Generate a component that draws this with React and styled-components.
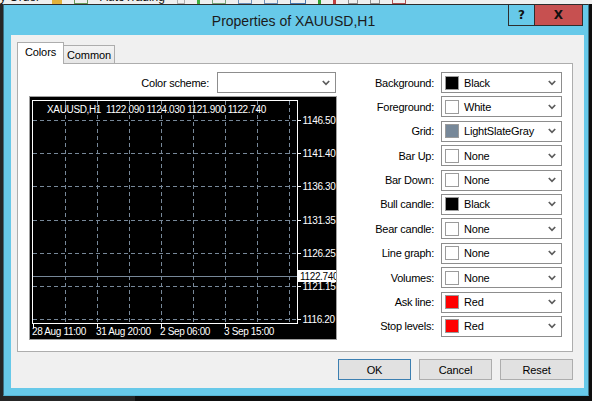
import React from 'react';
import styled, { createGlobalStyle } from 'styled-components';

const UI = `"Liberation Sans", Arial, sans-serif`;

const Global = createGlobalStyle`
  html, body { margin: 0; padding: 0; }
  body {
    width: 592px; height: 401px; overflow: hidden;
    background: #1d1d1d;
    font-family: ${UI};
  }
`;

const Desktop = styled.div`
  width: 592px;
  height: 401px;
  display: flex;
  flex-direction: column;
  background: linear-gradient(90deg, #262626 0 135px, #0e0e0e 135px);
`;

const TopStrip = styled.div`
  height: 4px;
  background: #efefef;
  display: flex;
  align-items: flex-end;
  gap: 12px;
  overflow: hidden;
  font-size: 12px;
  line-height: 14px;
  color: #111;
`;

const StripText = styled.span`
  white-space: nowrap;
`;

const StripIcon = styled.span`
  width: ${(p) => p.$w || 12}px;
  height: 14px;
  box-sizing: border-box;
  border: 1px solid ${(p) => p.$c};
  background: ${(p) => (p.$fill ? p.$c : 'transparent')};
  flex: none;
`;

const Window = styled.div`
  margin-left: 3px;
  width: 586px;
  height: 392px;
  box-sizing: border-box;
  border: 1px solid #2c2c2c;
  border-left-color: #3b6f82;
  border-right-color: #3b6f82;
  border-bottom: 1px solid #56b6d6;
  background: #67c9e9;
  display: flex;
  flex-direction: column;
`;

const TitleBar = styled.div`
  height: 30px;
  flex: none;
  display: grid;
  grid-template-columns: 1fr auto 1fr;
  align-items: center;
  padding-right: 5px;
`;

const Title = styled.div`
  grid-column: 2;
  font-family: ${UI};
  font-size: 14px;
  color: #1b1b1b;
  white-space: nowrap;
  padding-top: 1px;
`;

const CaptionButtons = styled.div`
  grid-column: 3;
  justify-self: end;
  align-self: start;
  display: flex;
`;

const CaptionButton = styled.div`
  width: ${(p) => p.$w}px;
  height: 21px;
  box-sizing: border-box;
  border: 1px solid #2e2e2e;
  border-top: none;
  ${(p) => (p.$close ? 'border-left: none;' : '')}
  background: ${(p) => (p.$close ? '#c75050' : 'transparent')};
  display: flex;
  align-items: center;
  justify-content: center;
  font-family: "DejaVu Sans", sans-serif;
  font-weight: bold;
  font-size: 12px;
  color: #111;
`;

const Client = styled.div`
  flex: 1;
  margin: 0 4px 7px 7px;
  background: #f0f0f0;
  padding: 7px 11px 0 6px;
  display: flex;
  flex-direction: column;
  font-family: ${UI};
  font-size: 11px;
  color: #000;
`;

const TabRow = styled.div`
  height: 21px;
  display: flex;
  align-items: flex-end;
  flex: none;
`;

const Tab = styled.div`
  box-sizing: border-box;
  width: ${(p) => p.$w}px;
  height: ${(p) => (p.$active ? 22 : 18)}px;
  margin-bottom: ${(p) => (p.$active ? -1 : 0)}px;
  border: 1px solid #adadad;
  border-bottom: none;
  ${(p) => (p.$active ? '' : 'border-left: none;')}
  background: ${(p) => (p.$active ? '#ffffff' : 'linear-gradient(#f3f3f3, #e6e6e6)')};
  position: relative;
  z-index: ${(p) => (p.$active ? 1 : 0)};
  display: flex;
  align-items: center;
  justify-content: center;
  padding-bottom: ${(p) => (p.$active ? 3 : 0)}px;
  letter-spacing: -0.1px;
`;

const Panel = styled.div`
  height: 289px;
  box-sizing: border-box;
  border: 1px solid #adadad;
  background: #ffffff;
  display: flex;
  justify-content: space-between;
  padding: 8px 10px 0 11px;
  flex: none;
`;

const LeftCol = styled.div`
  width: 308px;
  display: flex;
  flex-direction: column;
  gap: 3px;
`;

const SchemeRow = styled.div`
  display: flex;
  justify-content: flex-end;
  align-items: center;
  gap: 8px;
  padding-right: 1px;
`;

const Label = styled.div`
  white-space: nowrap;
  letter-spacing: -0.25px;
  text-align: right;
  justify-self: end;
  align-self: center;
`;

const Combo = styled.div`
  width: ${(p) => p.$w}px;
  height: 21px;
  box-sizing: border-box;
  border: 1px solid #8d8d8d;
  background: #fff;
  display: flex;
  align-items: center;
  padding: 0 5px 0 3px;
`;

const Swatch = styled.div`
  width: 14px;
  height: 14px;
  box-sizing: border-box;
  border: 1px solid #9b9b9b;
  background: ${(p) => p.$c};
  flex: none;
`;

const ComboText = styled.span`
  margin-left: 5px;
  white-space: nowrap;
  letter-spacing: -0.2px;
`;

const ChevronSvg = styled.svg`
  margin-left: auto;
  flex: none;
  display: block;
`;

const Chevron = () => (
  <ChevronSvg width="8" height="6" viewBox="0 0 8 6">
    <path d="M0.8 1 L4 4.3 L7.2 1" fill="none" stroke="#5c5c5c" strokeWidth="1.7" />
  </ChevronSvg>
);

const ChartBox = styled.div`
  width: 308px;
  height: 244px;
  box-sizing: border-box;
  border: 1px solid #a0a0a0;
  background: #000;
  overflow: hidden;
`;

const ChartSvg = styled.svg`
  display: block;
  text {
    font-family: ${UI};
    font-size: 10px;
    letter-spacing: -0.35px;
    fill: #ffffff;
  }
`;

const RightCol = styled.div`
  display: grid;
  grid-template-columns: auto 121px;
  grid-auto-rows: 21px;
  column-gap: 7px;
  row-gap: 3.4px;
  align-content: start;
`;

const ButtonRow = styled.div`
  display: flex;
  justify-content: flex-end;
  gap: 8px;
  margin-top: 7px;
`;

const Button = styled.div`
  width: 73px;
  height: 21px;
  box-sizing: border-box;
  border: 1px solid ${(p) => (p.$default ? '#3c7fb1' : '#adadad')};
  background: #e1e1e1;
  display: flex;
  align-items: center;
  justify-content: center;
  letter-spacing: -0.1px;
`;

const SelectBox = ({ w, color, text }) => (
  <Combo $w={w}>
    {color && <Swatch $c={color} />}
    {text && <ComboText>{text}</ComboText>}
    <Chevron />
  </Combo>
);

const grid = '#778899';
const hLines = [23.5, 56.5, 89.5, 123.5, 156.5, 189.5, 222.5];
const hLabels = ['1146.50', '1141.40', '1136.30', '1131.35', '1126.25', '1121.15', '1116.20'];
const vLines = [35, 67, 99, 131, 163, 195, 227, 259].map((x) => x + 0.5);
const xTicks = [3, 67, 131, 195];
const xLabels = [
  [2, '28 Aug 11:00'],
  [66, '31 Aug 20:00'],
  [130, '2 Sep 06:00'],
  [194, '3 Sep 15:00'],
];

const Chart = () => (
  <ChartBox>
    <ChartSvg width="306" height="242" viewBox="0 0 306 242">
      {vLines.map((x) => (
        <line key={x} x1={x} y1="4" x2={x} y2="226" stroke={grid} strokeDasharray="4 3" />
      ))}
      {hLines.map((y) => (
        <g key={y}>
          <line x1="3" y1={y} x2="267" y2={y} stroke={grid} strokeDasharray="4 3" />
          <line x1="267" y1={y} x2="271" y2={y} stroke="#ffffff" />
        </g>
      ))}
      <line x1="3" y1="179.5" x2="268" y2="179.5" stroke={grid} />
      <rect x="2.5" y="3.5" width="265" height="223" fill="none" stroke="#ffffff" />
      {xTicks.map((x) => (
        <line key={x} x1={x + 0.5} y1="226" x2={x + 0.5} y2="231" stroke="#ffffff" />
      ))}
      <text x="17" y="16" xmlSpace="preserve">{'XAUUSD,H1  1122.090 1124.030 1121.900 1122.740'}</text>
      {hLines.map((y, i) => (
        <text key={i} x="272.5" y={y + 3.5}>{hLabels[i]}</text>
      ))}
      <rect x="268" y="173" width="44" height="12" fill="#ffffff" />
      <text x="270" y="182.5" style={{ fill: '#000' }}>1122.740</text>
      {xLabels.map(([x, t]) => (
        <text key={t} x={x} y="238">{t}</text>
      ))}
    </ChartSvg>
  </ChartBox>
);

const rows = [
  ['Background:', '#000000', 'Black'],
  ['Foreground:', '#ffffff', 'White'],
  ['Grid:', '#778899', 'LightSlateGray'],
  ['Bar Up:', '#ffffff', 'None'],
  ['Bar Down:', '#ffffff', 'None'],
  ['Bull candle:', '#000000', 'Black'],
  ['Bear candle:', '#ffffff', 'None'],
  ['Line graph:', '#ffffff', 'None'],
  ['Volumes:', '#ffffff', 'None'],
  ['Ask line:', '#ff0000', 'Red'],
  ['Stop levels:', '#ff0000', 'Red'],
];

export default function App() {
  return (
    <Desktop>
      <Global />
      <TopStrip>
        <StripText>y Order</StripText>
        <StripIcon $c="#e2b23c" $w={10} $fill />
        <StripIcon $c="#6a9a5a" $w={14} />
        <StripText>AutoTrading</StripText>
        <StripIcon $c="#b0b0b0" $w={8} />
        <StripIcon $c="#3fae3f" $w={3} $fill />
        <StripIcon $c="#7aa67a" $w={14} />
        <StripIcon $c="#6c8fb8" $w={14} />
        <StripIcon $c="#6c8fb8" $w={14} />
        <StripIcon $c="#4a7ab0" $w={16} />
        <StripIcon $c="#30a030" $w={3} $fill />
        <StripIcon $c="#c04040" $w={3} $fill />
        <StripIcon $c="#909090" $w={10} />
        <StripIcon $c="#909090" $w={10} />
        <StripIcon $c="#b05050" $w={14} />
      </TopStrip>
      <Window>
        <TitleBar>
          <Title>Properties of XAUUSD,H1</Title>
          <CaptionButtons>
            <CaptionButton $w={27}>?</CaptionButton>
            <CaptionButton $w={48} $close>X</CaptionButton>
          </CaptionButtons>
        </TitleBar>
        <Client>
          <TabRow>
            <Tab $active $w={47}>Colors</Tab>
            <Tab $w={51}>Common</Tab>
          </TabRow>
          <Panel>
            <LeftCol>
              <SchemeRow>
                <Label>Color scheme:</Label>
                <SelectBox w={119} />
              </SchemeRow>
              <Chart />
            </LeftCol>
            <RightCol>
              {rows.map(([l, c, t]) => (
                <React.Fragment key={l}>
                  <Label>{l}</Label>
                  <SelectBox w={121} color={c} text={t} />
                </React.Fragment>
              ))}
            </RightCol>
          </Panel>
          <ButtonRow>
            <Button $default>OK</Button>
            <Button>Cancel</Button>
            <Button>Reset</Button>
          </ButtonRow>
        </Client>
      </Window>
    </Desktop>
  );
}
